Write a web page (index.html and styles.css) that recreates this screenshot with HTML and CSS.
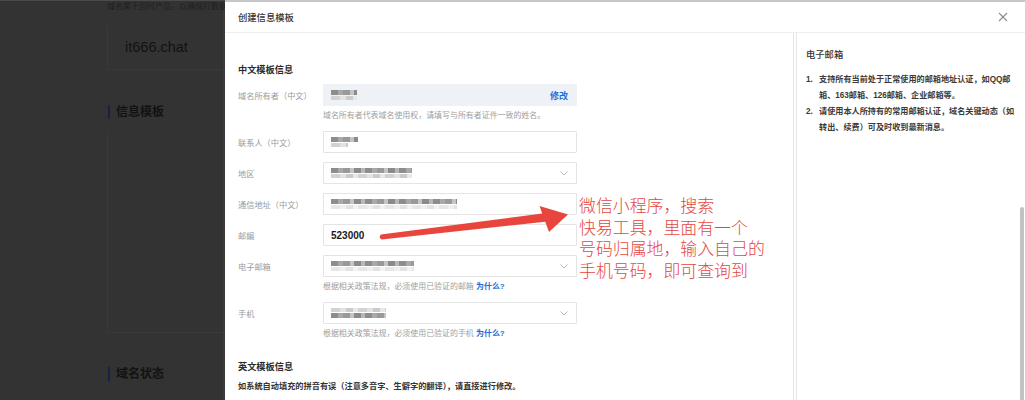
FILE: index.html
```html
<!DOCTYPE html>
<html lang="zh-CN">
<head>
<meta charset="utf-8">
<title>创建信息模板</title>
<link rel="stylesheet" href="styles.css">
</head>
<body>
<div class="page">
  <aside class="backdrop">
    <p class="bd-note">域名属于回时产品，以确保打数据</p>
    <div class="bd-domain">it666.chat</div>
    <h3 class="bd-title">信息模板</h3>
    <div class="bd-card"></div>
    <h3 class="bd-title bd-title-2">域名状态</h3>
  </aside>

  <section class="modal">
    <header class="modal-head">
      <span class="modal-title">创建信息模板</span>
      <svg class="close" width="10" height="10" viewBox="0 0 10 10"><path d="M1 1L9 9M9 1L1 9" stroke="#8c8c8c" stroke-width="1.1" fill="none"/></svg>
    </header>
    <div class="modal-body">
      <form class="form">
        <h4 class="sec-title">中文模板信息</h4>

        <div class="field has-help">
          <label class="lbl">域名所有者（中文）</label>
          <div class="ctl ctl-readonly">
            <span class="blur w26"><i class="b1"></i><i class="b2"></i></span>
            <a class="edit">修改</a>
          </div>
        </div>
        <p class="help">域名所有者代表域名使用权，请填写与所有者证件一致的姓名。</p>

        <div class="field">
          <label class="lbl">联系人（中文）</label>
          <div class="ctl"><span class="blur w27"><i class="b1"></i><i class="b2 short"></i></span></div>
        </div>

        <div class="field">
          <label class="lbl">地区</label>
          <div class="ctl">
            <span class="blur w81"><i class="b1"></i><i class="b2"></i></span>
            <svg class="chev" width="8" height="5" viewBox="0 0 8 5"><path d="M0.5 0.5L4 4L7.5 0.5" stroke="#b8b8b8" stroke-width="1" fill="none"/></svg>
          </div>
        </div>

        <div class="field">
          <label class="lbl">通信地址（中文）</label>
          <div class="ctl"><span class="blur w126"><i class="b1"></i><i class="b2 faint"></i></span></div>
        </div>

        <div class="field">
          <label class="lbl">邮编</label>
          <div class="ctl"><span class="val">523000</span></div>
        </div>

        <div class="field has-help">
          <label class="lbl">电子邮箱</label>
          <div class="ctl">
            <span class="blur w83"><i class="b1"></i><i class="b2 faint"></i></span>
            <svg class="chev" width="8" height="5" viewBox="0 0 8 5"><path d="M0.5 0.5L4 4L7.5 0.5" stroke="#b8b8b8" stroke-width="1" fill="none"/></svg>
          </div>
        </div>
        <p class="help">根据相关政策法规，必须使用已验证的邮箱 <a class="why">为什么?</a></p>

        <div class="field has-help">
          <label class="lbl">手机</label>
          <div class="ctl">
            <span class="blur w55"><i class="b2"></i><i class="b1"></i></span>
            <svg class="chev" width="8" height="5" viewBox="0 0 8 5"><path d="M0.5 0.5L4 4L7.5 0.5" stroke="#b8b8b8" stroke-width="1" fill="none"/></svg>
          </div>
        </div>
        <p class="help">根据相关政策法规，必须使用已验证的手机 <a class="why">为什么?</a></p>

        <h4 class="sec-title sec-title-2">英文模板信息</h4>
        <p class="sec-desc">如系统自动填充的拼音有误（注意多音字、生僻字的翻译），请直接进行修改。</p>
      </form>

      <aside class="tips">
        <h4 class="tips-title">电子邮箱</h4>
        <ol class="tips-list">
          <li><span class="num">1.</span><span class="txt">支持所有当前处于正常使用的邮箱地址认证，如QQ邮<br>箱、163邮箱、126邮箱、企业邮箱等。</span></li>
          <li><span class="num">2.</span><span class="txt">请使用本人所持有的常用邮箱认证，域名关键动态（如<br>转出、续费）可及时收到最新消息。</span></li>
        </ol>
      </aside>
      <div class="scroll-thumb"></div>
    </div>
  </section>

  <svg class="annot-arrow" width="1025" height="400" viewBox="0 0 1025 400">
    <path d="M381 234.6 L546 213 L547.5 221.5 L381.6 239.6 Q378 237.4 381 234.6 Z" fill="#e8463d"/>
    <path d="M568 214.5 L539.5 206 L549 232 Z" fill="#e8463d"/>
  </svg>
  <div class="annot-text">
    <span class="annot-line">微信小程序，搜索</span>
    <span class="annot-line">快易工具，里面有一个</span>
    <span class="annot-line">号码归属地，输入自己的</span>
    <span class="annot-line">手机号码，即可查询到</span>
  </div>
</div>
</body>
</html>
```

FILE: styles.css
```css
* { box-sizing: border-box; }
html, body { margin: 0; padding: 0; }
body {
  width: 1025px;
  height: 400px;
  overflow: hidden;
  font-family: "Liberation Sans", "Noto Sans CJK SC", sans-serif;
  background: #333;
}
p, h3, h4, ol { margin: 0; padding: 0; }
a { text-decoration: none; }

.page {
  position: relative;
  display: flex;
  width: 1025px;
  height: 400px;
}

/* ---------- dimmed page behind the modal ---------- */
.backdrop {
  width: 225px;
  flex: none;
  background: #333;
  border-top: 1px solid #4a4a4a;
  padding-left: 107px;
  overflow: hidden;
  box-shadow: inset -2px 0 0 #3a3a3a;
}
.bd-note {
  height: 24px;
  padding-top: 1px;
  font-size: 8px;
  line-height: 10px;
  color: #1f1f1f;
  white-space: nowrap;
  overflow: hidden;
}
.bd-domain {
  height: 45px;
  display: flex;
  align-items: center;
  padding-left: 17px;
  border-left: 1px solid #393939;
  border-bottom: 1px solid #393939;
  font-size: 14.5px;
  color: #121212;
}
.bd-title {
  margin-top: 35px;
  margin-left: 1px;
  height: 14px;
  line-height: 14px;
  padding-left: 6px;
  border-left: 2px solid #1a2148;
  font-size: 12px;
  font-weight: bold;
  color: #121212;
}
.bd-card {
  margin-top: 12px;
  height: 202px;
  border-left: 1px solid #393939;
  border-bottom: 1px solid #393939;
}
.bd-title-2 { margin-top: 34px; }

/* ---------- modal ---------- */
.modal {
  flex: 1;
  background: #fff;
  border-top: 2px solid #c6c6c6;
  display: flex;
  flex-direction: column;
}
.modal-head {
  height: 31px;
  flex: none;
  display: flex;
  align-items: center;
  justify-content: space-between;
  padding: 0 17px 0 13px;
  border-bottom: 1px solid #efefef;
}
.modal-title {
  font-size: 9.3px;
  font-weight: 500;
  color: #333;
}
.close { display: block; }

.modal-body {
  position: relative;
  flex: 1;
  display: flex;
}

.form {
  width: 568px;
  flex: none;
  padding: 29px 0 0 13px;
}
.sec-title {
  height: 16px;
  line-height: 16px;
  margin-bottom: 6px;
  font-size: 9.2px;
  font-weight: bold;
  color: #2b2b2b;
}
.sec-title-2 { margin-top: 19px; }
.sec-desc {
  font-size: 8.2px;
  line-height: 12px;
  font-weight: bold;
  color: #333;
  white-space: nowrap;
}

.field {
  display: flex;
  align-items: center;
  margin-bottom: 9px;
}
.field.has-help { margin-bottom: 4px; }
.lbl {
  width: 85px;
  flex: none;
  font-size: 8.2px;
  color: #9a9a9a;
  white-space: nowrap;
}
.ctl {
  width: 254px;
  height: 22px;
  border: 1px solid #e4e4e4;
  border-radius: 1px;
  background: #fff;
  display: flex;
  align-items: center;
  justify-content: space-between;
  padding: 0 8px 0 7px;
}
.ctl-readonly {
  background: #eef1f6;
  border-color: #eef1f6;
}
.edit {
  font-size: 9px;
  font-weight: bold;
  color: #1d6fd6;
}
.val {
  font-size: 10px;
  font-weight: bold;
  color: #1a1a1a;
}
.chev { display: block; }

.help {
  margin-left: 85px;
  margin-bottom: 9px;
  font-size: 7.95px;
  line-height: 12px;
  color: #a0a0a0;
  white-space: nowrap;
}
.why {
  font-weight: bold;
  color: #1d6fd6;
}

/* pixelated / redacted values */
.blur {
  display: flex;
  flex-direction: column;
  gap: 1px;
  filter: blur(0.6px);
}
.blur i { display: block; }
.b1 {
  height: 5px;
  background: repeating-linear-gradient(90deg, #8d8d8d 0 7px, #a9a9a9 7px 12px, #999 12px 19px, #c4c4c4 19px 23px, #8a8a8a 23px 30px, #b7b7b7 30px 34px);
}
.b2 {
  height: 4px;
  background: repeating-linear-gradient(90deg, #d2d2d2 0 9px, #e2e2e2 9px 15px, #cacaca 15px 22px, #e8e8e8 22px 27px);
}
.b2.short { width: 62%; }
.b2.faint { opacity: 0.55; }
.w26 { width: 26px; }
.w27 { width: 27px; }
.w55 { width: 55px; }
.w81 { width: 81px; }
.w83 { width: 83px; }
.w126 { width: 126px; }

/* right side tips */
.tips {
  flex: 1;
  border-left: 4px double #e6e6e6;
  padding: 14px 8px 0 9px;
}
.tips-title {
  font-size: 9.3px;
  line-height: 16px;
  font-weight: 500;
  color: #333;
  margin-bottom: 9px;
}
.tips-list { list-style: none; }
.tips-list li {
  display: flex;
  font-size: 8.15px;
  line-height: 16px;
  font-weight: bold;
  color: #3a3a3a;
  white-space: nowrap;
}
.tips-list .num { width: 13px; flex: none; }

.scroll-thumb {
  position: absolute;
  right: 1px;
  top: 174px;
  bottom: 0;
  width: 4px;
  border-radius: 2px 2px 0 0;
  background: #c2c2c2;
}

/* red hand-made annotation over the screenshot */
.annot-arrow {
  position: absolute;
  left: 0;
  top: 0;
  pointer-events: none;
}
.annot-text {
  position: absolute;
  left: 579px;
  top: 194px;
  display: flex;
  flex-direction: column;
  font-family: "Noto Sans CJK SC", sans-serif;
  font-size: 16.9px;
  font-weight: 300;
  color: #e4463f;
  white-space: nowrap;
}
.annot-line {
  display: block;
  height: 21.6px;
  line-height: 21.6px;
}
```
